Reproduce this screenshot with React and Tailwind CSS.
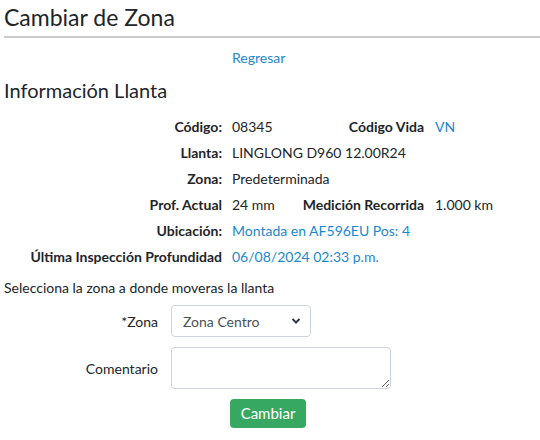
import React from 'react'

const font = { fontFamily: 'Lato, "Open Sans", sans-serif' }

const Row = ({ label, value, link, label2, value2, link2 }) => (
  <div className="flex items-baseline h-[26px]">
    <div className="w-[222px] text-right font-bold">{label}</div>
    <div className={`ml-[10px] ${label2 ? 'w-[58px]' : ''} whitespace-nowrap ${link ? 'text-[#1a88d0]' : ''}`}>{value}</div>
    {label2 && (
      <>
        <div className="ml-[10px] w-[124px] text-right font-bold whitespace-nowrap">{label2}</div>
        <div className={`ml-[11px] whitespace-nowrap ${link2 ? 'text-[#1a88d0]' : ''}`}>{value2}</div>
      </>
    )}
  </div>
)

const App = () => {
  return (
    <div className="w-[540px] h-[440px] bg-white text-[#212529] text-[14px] overflow-hidden" style={font}>
      {/* Header */}
      <h2 className="pl-[4px] pt-[2px] text-[23px] leading-[30px]">Cambiar de Zona</h2>
      <hr className="ml-[4px] mt-[4px] border-t-2 border-[#cccccc]" />

      <div className="mt-[9px] pl-[232px]">
        <a className="text-[#1a88d0]">Regresar</a>
      </div>

      <h3 className="pl-[4px] mt-[10px] text-[20px] leading-[24px]">Información Llanta</h3>

      {/* Info */}
      <div className="mt-[14px]">
        <Row label="Código:" value="08345" label2="Código Vida" value2="VN" link2 />
        <Row label="Llanta:" value="LINGLONG D960 12.00R24" />
        <Row label="Zona:" value="Predeterminada" />
        <Row label="Prof. Actual" value="24 mm" label2="Medición Recorrida" value2="1.000 km" />
        <Row label="Ubicación:" value="Montada en AF596EU Pos: 4" link />
        <Row label="Última Inspección Profundidad" value="06/08/2024 02:33 p.m." link />
      </div>

      {/* Form */}
      <p className="pl-[4px] mt-[5px]">Selecciona la zona a donde moveras la llanta</p>

      <div className="flex items-center mt-[7px]">
        <label className="w-[158px] text-right">*Zona</label>
        <div className="ml-[13px] relative w-[140px] h-[32px]">
          <select
            className="appearance-none w-full h-full border border-[#ced4da] rounded-[4px] pl-[11px] bg-white text-[#495057]"
            style={font}
            defaultValue="centro"
          >
            <option value="centro">Zona Centro</option>
          </select>
          <svg className="absolute right-[10px] top-[12px] pointer-events-none" width="10" height="8" viewBox="0 0 10 8">
            <path d="M1.5 2 L5 5.5 L8.5 2" fill="none" stroke="#343a40" strokeWidth="2" />
          </svg>
        </div>
      </div>

      <div className="flex items-center mt-[10px]">
        <label className="w-[158px] text-right">Comentario</label>
        <textarea className="ml-[13px] w-[220px] h-[42px] border border-[#ced4da] rounded-[4px]" />
      </div>

      <div className="mt-[10px] pl-[230px]">
        <button className="w-[76px] h-[29px] bg-[#37a862] text-white rounded-[4px] text-[15px]" style={font}>
          Cambiar
        </button>
      </div>
    </div>
  )
}

export default App
